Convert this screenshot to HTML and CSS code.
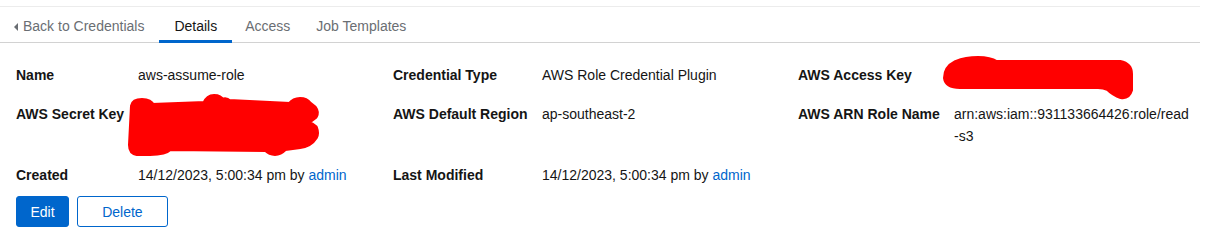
FILE: index.html
```html
<!DOCTYPE html>
<html lang="en">
<head>
<meta charset="utf-8">
<title>Credential details</title>
<link rel="stylesheet" href="styles.css">
</head>
<body>
<div class="page">
  <div class="topline"></div>
  <nav class="tabs">
    <a class="tab tab-back" href="#"><span class="caret"></span>Back to Credentials</a>
    <a class="tab active" href="#">Details</a>
    <a class="tab tab-tight" href="#">Access</a>
    <a class="tab tab-tight" href="#">Job Templates</a>
  </nav>
  <dl class="details">
    <dt>Name</dt>
    <dd>aws-assume-role</dd>
    <dt>Credential Type</dt>
    <dd>AWS Role Credential Plugin</dd>
    <dt>AWS Access Key</dt>
    <dd>AKIAXXXXXXXXXX</dd>
    <dt>AWS Secret Key</dt>
    <dd>XXXXXXXXXXXXXX</dd>
    <dt>AWS Default Region</dt>
    <dd>ap-southeast-2</dd>
    <dt>AWS ARN Role Name</dt>
    <dd>arn:aws:iam::931133664426:role/read<wbr><span class="nowrap">-s3</span></dd>
    <dt>Created</dt>
    <dd>14/12/2023, 5:00:34 pm by <a href="#">admin</a></dd>
    <dt>Last Modified</dt>
    <dd>14/12/2023, 5:00:34 pm by <a href="#">admin</a></dd>
  </dl>
  <div class="actions">
    <button class="btn btn-primary" type="button">Edit</button>
    <button class="btn btn-secondary" type="button">Delete</button>
  </div>
  <svg class="redact" width="1216" height="233" viewBox="0 0 1216 233" aria-hidden="true">
    <path d="M946 78 Q946 68 956 63 Q966 59 978 59 Q990 59 996 63 L1120 63 Q1130 65 1130 74 L1130 90 Q1128 97 1121 96 Q1114 94 1108 88 Q1104 86 1098 86 L960 86 Q947 86 946 78 Z"/>
    <path d="M133 106 Q134 101 142 101 Q150 101 152 106 L205 104 Q208 97 214 97 Q220 97 222 101 Q226 99 229 102 L290 105 Q294 100 300 100 Q306 100 309 104 L314 108 Q317 112 315 116 L307 122 L315 128 Q317 133 315 137 Q310 145 300 146 L285 148 Q280 153 275 153 Q270 153 266 149 L170 148 Q165 153 150 153 L137 153 Q131 152 131 145 Z"/>
  </svg>
</div>
</body>
</html>
```
FILE: styles.css
```css
html, body {
  margin: 0;
  padding: 0;
  background: #ffffff;
}

body {
  font-family: "Liberation Sans", Arial, sans-serif;
  font-size: 14px;
  color: #151515;
}

.page {
  position: relative;
  width: 1216px;
  height: 233px;
  overflow: hidden;
}

.topline {
  width: 1200px;
  height: 1px;
  margin-top: 6px;
  background: #ececec;
}

.tabs {
  display: flex;
  width: 1200px;
  border-bottom: 1px solid #d2d2d2;
}

.tab {
  position: relative;
  display: flex;
  align-items: center;
  padding: 9px 15px 5px;
  line-height: 21px;
  color: #6a6e73;
  text-decoration: none;
}

.tab-back {
  padding-left: 14px;
}

.tab-tight {
  padding-left: 13px;
  padding-right: 13px;
}

.caret {
  display: inline-block;
  width: 0;
  height: 0;
  margin-right: 5px;
  border-top: 4px solid transparent;
  border-bottom: 4px solid transparent;
  border-right: 4px solid #6a6e73;
}

.tab.active {
  color: #151515;
}

.tab.active::after {
  content: "";
  position: absolute;
  left: 0;
  right: 0;
  bottom: -1px;
  height: 3px;
  background: #0066cc;
}

.details {
  display: grid;
  grid-template-columns: 122px 255px 149px 256px 156px 1fr;
  row-gap: 17px;
  margin: 21px 16px 0 16px;
  line-height: 22px;
}

.details dt {
  font-weight: 700;
  margin: 0;
  white-space: nowrap;
}

.details dd {
  margin: 0;
  min-width: 0;
}

.details a {
  color: #0066cc;
  text-decoration: none;
}

.nowrap {
  white-space: nowrap;
}

.actions {
  display: flex;
  gap: 8px;
  margin: 10px 0 0 16px;
}

.btn {
  height: 31px;
  font-family: inherit;
  font-size: 14px;
  border-radius: 3px;
  cursor: pointer;
}

.btn-primary {
  padding: 0 13.5px;
  background: #0066cc;
  color: #ffffff;
  border: 1px solid #0066cc;
}

.btn-secondary {
  padding: 0 24px;
  background: #ffffff;
  color: #0066cc;
  border: 1px solid #0066cc;
}

.redact {
  position: absolute;
  left: 0;
  top: 0;
  pointer-events: none;
}

.redact path {
  fill: #ff0000;
  stroke: #ff0000;
  stroke-width: 6;
  stroke-linejoin: round;
}
```
